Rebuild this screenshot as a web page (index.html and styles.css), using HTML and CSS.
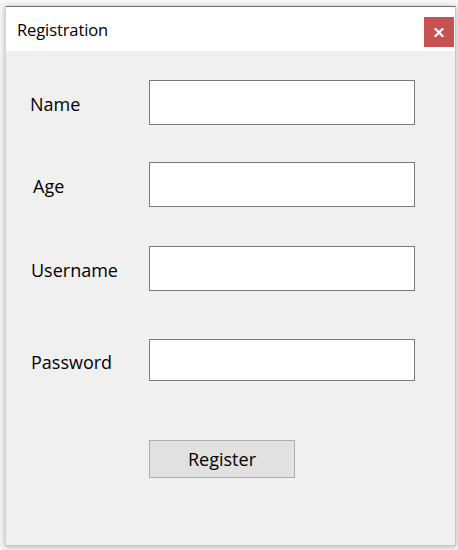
FILE: index.html
```html
<!DOCTYPE html>
<html>
<head>
<meta charset="utf-8">
<link rel="stylesheet" href="styles.css">
</head>
<body>
<div class="window">
  <div class="titlebar">
    <span class="title">Registration</span>
    <button class="close" aria-label="Close">
      <svg width="10" height="9" viewBox="0 0 10 9"><path d="M1.5 1 L8.5 8 M8.5 1 L1.5 8" stroke="#fff" stroke-width="2.2" stroke-linecap="square"/></svg>
    </button>
  </div>
  <div class="content">
    <div class="row row-name"><label class="lbl lbl-name">Name</label><input class="field" type="text"></div>
    <div class="row row-age"><label class="lbl lbl-age">Age</label><input class="field" type="text"></div>
    <div class="row row-user"><label class="lbl lbl-user">Username</label><input class="field" type="text"></div>
    <div class="row row-pass"><label class="lbl lbl-pass">Password</label><input class="field field-short" type="password"></div>
    <div class="row row-btn"><span class="lbl"></span><button class="register">Register</button></div>
  </div>
</div>
</body>
</html>
```
FILE: styles.css
```css
html, body {
  margin: 0;
  padding: 0;
  background: #f7f7f7;
  width: 458px;
  height: 550px;
  overflow: hidden;
}
body {
  font-family: "Open Sans", "Noto Sans", sans-serif;
  padding: 6px 0 0 5px;
  box-sizing: border-box;
}
.window {
  width: 451px;
  height: 540px;
  box-sizing: border-box;
  border-top: 1px solid #6f6f6f;
  border-left: 1px solid #d4d4d4;
  border-right: 1px solid #c8c8c8;
  border-bottom: 1px solid #c8c8c8;
  box-shadow: 0 1px 6px rgba(0,0,0,0.28);
  background: #f0f0f0;
  display: flex;
  flex-direction: column;
}
.titlebar {
  height: 44px;
  background: #ffffff;
  display: flex;
  align-items: center;
  justify-content: space-between;
  padding-left: 11px;
  padding-right: 1px;
}
.title {
  font-size: 16.5px;
  color: #000;
  margin-top: 1px;
  letter-spacing: -0.1px;
}
.close {
  width: 30px;
  height: 30px;
  background: #c75050;
  border: none;
  padding: 0;
  display: flex;
  align-items: center;
  justify-content: center;
  align-self: flex-start;
  margin-top: 10px;
}
.content {
  flex: 1;
  display: flex;
  flex-direction: column;
  padding-top: 29px;
}
.row {
  display: flex;
  align-items: center;
}
.row-age { margin-top: 37px; }
.row-user { margin-top: 39px; }
.row-pass { margin-top: 48px; }
.row-btn { margin-top: 59px; }
.lbl {
  width: 143px;
  box-sizing: border-box;
  font-size: 18px;
  color: #000;
  padding-top: 3px;
}
.lbl-name { padding-left: 24px; }
.lbl-age { padding-left: 27px; }
.lbl-user { padding-left: 25px; }
.lbl-pass { padding-left: 25px; }
.field {
  width: 266px;
  height: 45px;
  box-sizing: border-box;
  border: 1px solid #7a7a7a;
  background: #fff;
  margin: 0;
  padding: 0 4px;
  outline: none;
}
.field-short { height: 42px; }
.register {
  width: 146px;
  height: 38px;
  box-sizing: border-box;
  background: #e1e1e1;
  border: 1px solid #adadad;
  font-family: "Open Sans", "Noto Sans", sans-serif;
  font-size: 18px;
  color: #000;
  padding: 0;
  margin: 0;
}
```
